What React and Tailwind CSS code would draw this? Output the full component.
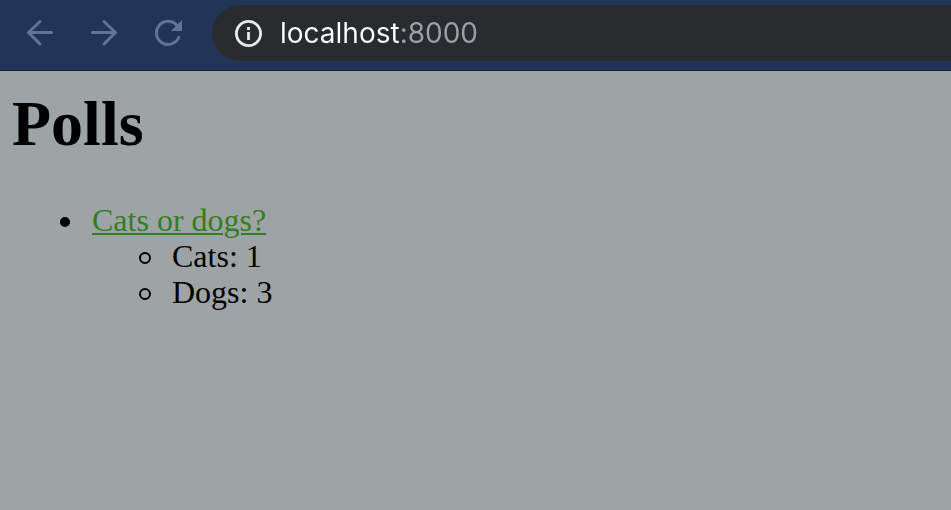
import React from "react";

const polls = [
  {
    question: "Cats or dogs?",
    choices: [
      { name: "Cats", votes: 1 },
      { name: "Dogs", votes: 3 },
    ],
  },
];

function NavButton({ label, children }) {
  return (
    <button type="button" aria-label={label} className="flex size-8 shrink-0 items-center justify-center text-[#5f7596]">
      <svg viewBox="0 0 32 32" className="size-8" fill="none" stroke="currentColor" strokeWidth="3" strokeLinecap="round" strokeLinejoin="round" aria-hidden="true">
        {children}
      </svg>
    </button>
  );
}

function Toolbar() {
  return (
    <header className="flex items-center gap-7 border-b border-[#16223d] bg-[#223558] pt-[5px] pb-[9px] pl-6">
      <nav className="flex gap-8" aria-label="Browser navigation">
        <NavButton label="Back">
          <path d="M16 4.500 4.500 15.500 16 27M4.500 15.500H27.500" />
        </NavButton>
        <NavButton label="Forward">
          <path d="M16 4.500 27.500 15.500 16 27M27.500 15.500H4.500" />
        </NavButton>
        <NavButton label="Reload">
          <path d="M24.500 8A11.600 11.600 0 1 0 26.800 20.300" />
          <path d="M30 3V14H19Z" fill="currentColor" stroke="none" />
        </NavButton>
      </nav>
      <div className="flex h-14 min-w-0 flex-1 items-center gap-[18px] rounded-l-full bg-[#282c2f] pl-[22px]">
        <svg viewBox="0 0 28 28" className="size-7 shrink-0" fill="none" stroke="#e8eaed" strokeWidth="2.800" aria-hidden="true">
          <circle cx="14.500" cy="14.500" r="12.100" />
          <path d="M14.500 13V21M14.500 8V11" />
        </svg>
        <input
          type="text"
          aria-label="Address"
          defaultValue="localhost:8000"
          spellCheck={false}
          className="min-w-0 flex-1 bg-linear-to-r from-white from-[120px] to-[#9aa0a6] to-[120px] bg-clip-text font-['Inter',sans-serif] text-[28px] leading-9 text-transparent outline-none"
        />
      </div>
    </header>
  );
}

export default function App() {
  return (
    <div className="min-h-screen bg-[#9ea4a6] font-['Liberation_Serif',serif] text-[32px] leading-9 text-black">
      <Toolbar />
      <main className="px-3 pt-4">
        <h1 className="text-[64px] leading-[74px] font-bold">Polls</h1>
        <ul className="mt-[41px] list-none pl-20">
          {polls.map((poll) => (
            <li
              key={poll.question}
              className="before:mr-[22px] before:-ml-8 before:inline-block before:size-2.5 before:rounded-full before:bg-black before:align-[4px]"
            >
              <a href="#poll" className="text-[#327e20] underline decoration-2 underline-offset-2">
                {poll.question}
              </a>
              <ul className="list-none pl-20">
                {poll.choices.map((choice) => (
                  <li
                    key={choice.name}
                    className="before:mr-[21px] before:-ml-[33px] before:inline-block before:size-3 before:rounded-full before:border-2 before:border-black before:align-[3px]"
                  >
                    {`${choice.name}: ${choice.votes}`}
                  </li>
                ))}
              </ul>
            </li>
          ))}
        </ul>
      </main>
    </div>
  );
}
